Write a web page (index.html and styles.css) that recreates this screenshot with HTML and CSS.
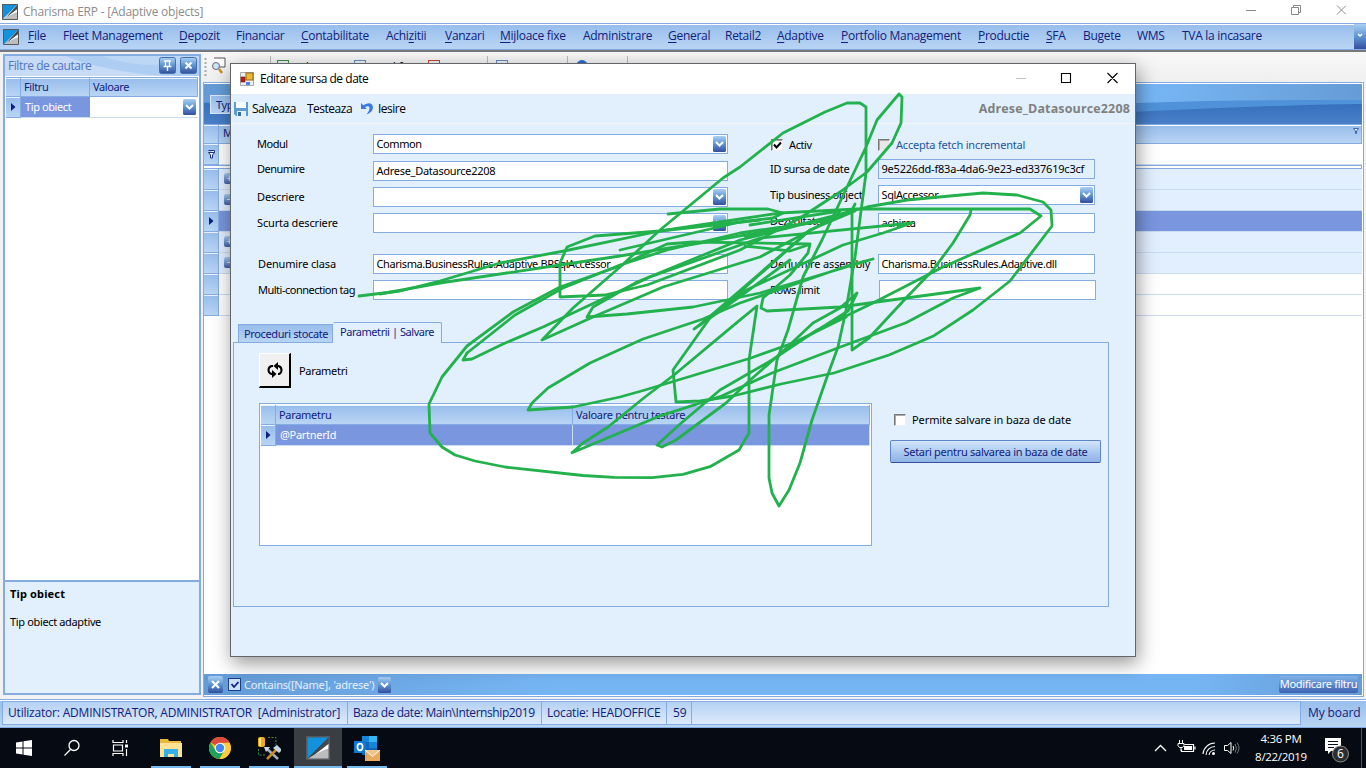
FILE: index.html
```html
<!DOCTYPE html>
<html lang="ro">
<head>
<meta charset="utf-8">
<title>Charisma ERP - [Adaptive objects]</title>
<link rel="stylesheet" href="styles.css">
</head>
<body>
<svg class="defs" width="0" height="0">
  <defs>
    <linearGradient id="gb" x1="0" y1="0" x2="0" y2="1"><stop offset="0" stop-color="#a9d0f3"/><stop offset=".5" stop-color="#5f94d2"/><stop offset="1" stop-color="#344f9e"/></linearGradient>
    <linearGradient id="band" x1="0" y1="0" x2="1" y2="0"><stop offset="0" stop-color="#649bd6"/><stop offset=".5" stop-color="#76b5f4"/><stop offset=".82" stop-color="#76b5f4"/><stop offset="1" stop-color="#669cd6"/></linearGradient>
    <linearGradient id="deep" x1="0" y1="0" x2="0" y2="1"><stop offset="0" stop-color="#356fbd"/><stop offset="1" stop-color="#4a80c8"/></linearGradient>
    <symbol id="logo" viewBox="0 0 16 16"><path fill="#1292dc" d="M0 0h16L0 16z"/><path fill="#4a4a4c" d="M16 0v5L3 14.500z"/><path fill="#fff" d="M16 4.500V8C11 10 6 12.500 2.500 15z"/><path fill="#bdbdbd" d="M16 8v8H0C5 12.500 10 10 16 8z"/><path fill="none" stroke="#555a60" d="M.5.5h15v15H.5z"/></symbol>
    <symbol id="drop" viewBox="0 0 13 16"><rect width="13" height="16" rx="1.500" fill="url(#gb)"/><path d="M3 6l3.500 3.500L10 6" fill="none" stroke="#fff" stroke-width="2"/></symbol>
    <symbol id="ptr" viewBox="0 0 5 8"><path d="M0 0l4.500 4L0 8z" fill="#0a2080"/></symbol>
  </defs>
</svg>
<div class="app">
  <header class="titlebar">
    <svg width="16" height="16"><use href="#logo"/></svg>
    <span class="app-title">Charisma ERP - [Adaptive objects]</span>
    <svg class="win-buttons" width="100" height="14" fill="none" stroke="#8a8a8a"><path d="M0 7.500h10M45.500 4.500h7v7h-7zM47.500 4.500v-2h7v7h-2M91 2.500l9 9M100 2.500l-9 9"/></svg>
  </header>

  <nav class="menubar">
    <svg width="16" height="16"><use href="#logo"/></svg>
    <div class="menu">
      <span><u>F</u>ile</span><span>Fleet Management</span><span><u>D</u>epozit</span><span>F<u>i</u>nanciar</span><span><u>C</u>ontabilitate</span><span>Achi<u>z</u>itii</span><span><u>V</u>anzari</span><span><u>M</u>ijloace fixe</span><span>Administrare</span><span><u>G</u>eneral</span><span>Retail2</span><span><u>A</u>daptive</span><span><u>P</u>ortfolio Management</span><span><u>P</u>roductie</span><span><u>S</u>FA</span><span>Bugete</span><span>WMS</span><span>TVA la incasare</span>
    </div>
    <svg class="menu-more" width="12" height="25"><rect width="12" height="25" fill="url(#gb)"/><path d="M4 10l2 2 2-2" fill="none" stroke="#fff" stroke-width="1.500"/></svg>
  </nav>

  <main class="workspace">
    <aside class="side">
      <div class="side-head">
        <svg class="curve" width="194" height="20"><path d="M60 0Q110 20 194 21H0V0z" fill="#c7dbf6"/><path d="M97 0Q140 16 194 4V0z" fill="#bcd6f6"/></svg>
        <span class="side-title">Filtre de cautare</span>
        <svg width="38" height="17"><rect x=".5" y=".5" width="16" height="16" rx="2" fill="url(#gb)" stroke="#456fae"/><path d="M5 4h7M6.500 4v5M10.500 4v5M4.500 9.500h8M8.500 10v4" stroke="#fff" stroke-width="1.300" fill="none"/><rect x="21.500" y=".5" width="16" height="16" rx="2" fill="url(#gb)" stroke="#456fae"/><path d="M26.500 5.500l6 6M32.500 5.500l-6 6" stroke="#fff" stroke-width="2"/></svg>
      </div>
      <div class="filter-grid">
        <span class="cell-h"></span><span class="cell-h t11">Filtru</span><span class="cell-h t11">Valoare</span>
        <span class="cell-i"><svg width="5" height="8"><use href="#ptr"/></svg></span><span class="cell-sel t11">Tip obiect</span><span class="cell-v"><svg width="13" height="16"><use href="#drop"/></svg></span>
      </div>
      <div class="side-desc"><b>Tip obiect</b><p>Tip obiect adaptive</p></div>
    </aside>

    <section class="content">
      <div class="tools">
        <svg width="20" height="20"><path d="M1.500 2v18" stroke="#a8a8a8" stroke-width="2" stroke-dasharray="2 2"/></svg>
        <svg width="20" height="18"><path d="M4 2h11v9h-6" fill="#fff" stroke="#555"/><circle cx="6" cy="10" r="3.500" fill="#cfe6f8" stroke="#667"/><path d="M9 13l3 4" stroke="#d08a20" stroke-width="2.500"/></svg>
        <span class="tool tool-a">Cauta</span>
        <span class="tool tool-b"><i class="doc green"></i>Adauga</span>
        <span class="tool tool-c"><i class="doc"></i>Modifica</span>
        <span class="tool tool-d"><i class="doc red"></i>Sterge</span>
        <span class="tool tool-e"><i class="doc"></i>Activari</span>
        <span class="tool tool-f"><i class="doc blue"></i>Iesire</span>
      </div>
      <div class="sheet">
        <div class="group-band">
          <svg class="curve" width="1158" height="40"><rect width="1158" height="40" fill="url(#band)"/><path d="M0 18C300 24 700 22 932 19 1020 16 1100 16 1158 16v24H0z" fill="#4f92d9"/><path d="M0 19C120 24 300 40 700 40 830 34 1000 22 1158 20v20H0z" fill="url(#deep)"/></svg>
          <span class="group-tag t11">Type</span>
        </div>
        <div class="row head"><span class="ind"></span><span class="row-text t11">Modul</span><svg class="funnel" width="6" height="6"><path d="M.5.500h5L3.500 3v2.500h-1V3z" fill="#fff" stroke="#4567b5"/></svg></div>
        <div class="row blank filter"><span class="ind"><svg width="7" height="9"><path d="M.5.500h6v2L4.500 5v3h-2V5l-2-2.500h6" fill="#fff" stroke="#1c348f"/></svg></span></div>
        <div class="split"></div>
        <div class="row"><span class="ind"></span><i class="box">+</i></div>
        <div class="row"><span class="ind"></span><i class="box">−</i></div>
        <div class="row sel"><span class="ind"><svg width="5" height="8"><use href="#ptr"/></svg></span></div>
        <div class="row"><span class="ind"></span><i class="box">+</i></div>
        <div class="row"><span class="ind"></span><i class="box">−</i></div>
        <div class="row blank"><span class="ind"></span></div>
        <div class="row blank"><span class="ind"></span></div>
        <div class="void"></div>
        <div class="filter-bar">
          <svg width="35" height="17"><rect width="15" height="17" rx="2" fill="url(#gb)"/><path d="M4 5l7 7M11 5l-7 7" stroke="#fff" stroke-width="2"/><rect x="20.500" y="2.500" width="12" height="12" fill="#cfe1f8" stroke="#1c3f8c"/><path d="M23.500 8l2.500 3 4.500-5" fill="none" stroke="#0a2080" stroke-width="1.800"/></svg>
          <span class="expr t11">Contains([Name], 'adrese')</span>
          <svg width="13" height="16"><use href="#drop"/></svg>
          <span class="edit-filter t11">Modificare filtru</span>
        </div>
      </div>
    </section>
  </main>

  <footer class="status">
    <span class="seg s1">Utilizator: ADMINISTRATOR, ADMINISTRATOR&nbsp; [Administrator]</span><span class="seg s2">Baza de date: Main\Internship2019</span><span class="seg s3">Locatie: HEADOFFICE</span><span class="seg s4">59</span><span class="seg s5"></span><span class="board">My board</span>
  </footer>

  <div class="taskbar">
    <div class="tb"><svg width="18" height="18"><path fill="#fff" d="M1 3.500l6.500-1v6H1zM8.500 2.300L17 1v7.500H8.500zM1 9.500h6.500v6L1 14.500zM8.500 9.500H17V17l-8.500-1.300z"/></svg></div>
    <div class="tb"><svg width="18" height="18" fill="none" stroke="#fff" stroke-width="1.300"><circle cx="11" cy="6.500" r="5"/><path d="M7.500 10.500L1.500 16.500"/></svg></div>
    <div class="tb"><svg width="18" height="18" fill="none" stroke="#fff" stroke-width="1.200"><path d="M2 1v2.500h10V1M2.500 6h9v6h-9zM2 17v-2.500h10V17M15.500 1v3M15.500 10v7"/><path d="M14 5.500h3v3h-3z" fill="#fff" stroke="none"/></svg></div>
    <div class="tb on w49"><svg width="22" height="20"><path d="M0 1h8l1 2h12v16H0z" fill="#e9b93c"/><path d="M0 5h22v14H0z" fill="#ffe394"/><path d="M4 11h14v8h-4v-3H8v3H4z" fill="#36aee8"/></svg></div>
    <div class="tb on w49"><svg width="22" height="22"><circle cx="11" cy="11" r="11" fill="#fbc116"/><path d="M11 11L1.500 5.500A11 11 0 0 1 20.500 5.500L11 6z" fill="#de4b3e"/><path d="M1.500 5.500A11 11 0 0 0 10.500 22l5-8.500L6.300 13z" fill="#1fa15d"/><path d="M11 6h9.500a11 11 0 0 1-10 16l5-8.500z" fill="#fccd3a"/><circle cx="11" cy="11" r="5.300" fill="#fff"/><circle cx="11" cy="11" r="4.200" fill="#4285f4"/></svg></div>
    <div class="tb on w49"><svg width="24" height="24"><rect x="1" y="1" width="7" height="10" rx="2" fill="#f0a81c"/><path d="M3 2v8" stroke="#ffe88a" stroke-width="2"/><path d="M11 1.500h8v9M1.500 13v6h7" fill="none" stroke="#4b8a3c" stroke-dasharray="2 1.500"/><path d="M9 12l12 11" stroke="#9fb2c4" stroke-width="2.500"/><path d="M20 13L10 23" stroke="#c88a28" stroke-width="2.500"/><path d="M7 11l6 0-4 5zM16 12l4-3 5 5-3 3z" fill="#c9d6e2"/></svg></div>
    <div class="tb on active"><svg width="24" height="24"><use href="#logo"/></svg></div>
    <div class="tb on w49 out"><svg width="26" height="26"><path d="M8 1h15v19H8z" fill="#1066b5"/><path d="M15 1h8v6h-8z" fill="#35b8f1"/><path d="M8 1h7v6H8zM15 7h8v6h-8z" fill="#1684d8"/><rect y="6" width="12" height="12" fill="#0f78d4"/><ellipse cx="6" cy="12" rx="2.600" ry="3.300" fill="none" stroke="#fff" stroke-width="1.700"/><path d="M11 15h15v11H11z" fill="#e9a95e"/><path d="M11 15l7.500 6.500L26 15" fill="#f4c58b" stroke="#fff"/></svg></div>
    <div class="tray">
      <svg width="90" height="20" fill="none" stroke="#fff"><path d="M5 13l5.500-5.500L16 13" stroke-width="1.300"/><path d="M34.500 6.500h9v7h-12v-2M45 8.500v3" stroke-width="1.200"/><path fill="#fff" stroke="none" d="M34 8h8v4h-8z"/><path d="M29.500 2v3M32.500 2v3M28 5.500h6v2l-1.500 2h-3L28 7.500zM31 9v4"/><path d="M53 16A12 12 0 0 1 65 5M56 17a9 9 0 0 1 9-8.500M59 17a6 6 0 0 1 6-5" stroke-width="1.100"/><circle cx="63.500" cy="15.500" r="1.500" fill="#fff" stroke="none"/><path d="M74.500 7.500h3l3.500-3v11l-3.500-3h-3z"/><path d="M83 8q1.500 2 0 4.500"/><path d="M85 6q3 4 0 8.500M87 4.500q4 5.500 0 11" stroke="#777"/></svg>
      <div class="clock"><span>4:36 PM</span><span>8/22/2019</span></div>
      <svg class="note" width="26" height="26"><path d="M0 1h16v13H6l-3 3v-3H0z" fill="#fff"/><path d="M3 4.500h10M3 7.500h10M3 10.500h6" stroke="#0a0e16"/><circle cx="15.500" cy="17" r="8" fill="#2b2d31" stroke="#8c8c8c"/><text x="15.500" y="21" fill="#fff" font-size="12" text-anchor="middle" font-family="Open Sans, sans-serif">6</text></svg>
    </div>
  </div>
</div>

<div class="dialog">
  <div class="dlg-title">
    <svg width="14" height="14"><path d="M.5.500h13v13H.5z" fill="#eee" stroke="#aaa"/><rect x="6" y="1" width="7" height="7" fill="#e9b93a" stroke="#8f6a10"/><rect x="1" y="5" width="4" height="5" fill="#b3201a" stroke="#7c120e" stroke-width=".6"/><rect x="6" y="10" width="4" height="3" fill="#4f7fe8"/></svg>
    <span>Editare sursa de date</span>
    <svg class="dlg-buttons" width="102" height="12" fill="none" stroke="#000" stroke-width="1.100"><path d="M0 6.500h10" stroke="#c4c4c4"/><path d="M45.500 1.500h9v9h-9zM91.500 1l10 10M101.500 1l-10 10"/></svg>
  </div>
  <div class="dlg-tools">
    <svg width="14" height="14"><path d="M0 0h14v14H2l-2-2z" fill="#5b9bd0"/><path d="M2 0h10v6H2z" fill="#f5fbff"/><path d="M3 9h9v5H3z" fill="#e8eef4"/><path d="M4 10h3v4H4z" fill="#3b6c9c"/></svg>
    <span class="w-sal">Salveaza</span><span class="w-test">Testeaza</span>
    <svg width="13" height="13"><path d="M0 1v6h6L4 5.200Q7.500 3 8.500 5.500 8.800 9 5.500 12.500 11.500 10.500 12 5.500 11-1.500 2.300 3.200z" fill="#3a7be8"/></svg>
    <span class="w-ies">Iesire</span>
    <b class="dlg-name">Adrese_Datasource2208</b>
  </div>
  <div class="form t11">
    <div class="col left">
      <div class="f"><label>Modul</label><div class="in">Common<svg width="13" height="16"><use href="#drop"/></svg></div></div>
      <div class="f g7"><label class="up">Denumire</label><div class="in name">Adrese_Datasource2208</div></div>
      <div class="f g6"><label class="sp">Descriere</label><div class="in"><svg width="13" height="16"><use href="#drop"/></svg></div></div>
      <div class="f g6"><label class="sp">Scurta descriere</label><div class="in"><svg width="13" height="16"><use href="#drop"/></svg></div></div>
      <div class="f g21"><label class="sp in1">Denumire clasa</label><div class="in">Charisma.BusinessRules.Adaptive.BRSqlAccessor</div></div>
      <div class="f g6"><label class="in1">Multi-connection tag</label><div class="in"></div></div>
    </div>
    <div class="col right">
      <div class="f checks"><i class="chk"><svg width="9" height="9"><path d="M1 3.500l2.500 3L8 1.500" fill="none" stroke="#000" stroke-width="2"/></svg></i><span class="activ">Activ</span><i class="chk off"></i><span class="fetch">Accepta fetch incremental</span></div>
      <div class="f g5"><label>ID sursa de date</label><div class="in ro">9e5226dd-f83a-4da6-9e23-ed337619c3cf</div></div>
      <div class="f g6"><label>Tip business object</label><div class="in">SqlAccessor<svg width="13" height="16"><use href="#drop"/></svg></div></div>
      <div class="f g8"><label class="up">Dezvoltator</label><div class="in">achirca</div></div>
      <div class="f g21"><label class="sp2">Denumire assembly</label><div class="in">Charisma.BusinessRules.Adaptive.dll</div></div>
      <div class="f g6"><label class="rl">Rows limit</label><div class="in"></div></div>
    </div>
  </div>
  <div class="tabs t11"><span class="tab">Proceduri stocate</span><span class="tab cur">Parametrii | Salvare</span></div>
  <div class="page t11">
    <div class="refresh"><span class="rbtn"><svg width="16" height="16" fill="none" stroke="#000" stroke-width="2"><path d="M6 4H4.500Q1.500 5 1.500 8T4.500 12H6M10 4h1.500Q14.500 5 14.500 8T12 12h-1"/><path d="M11 0v8L6.500 4zM5 8v8l4.500-4z" fill="#000" stroke="none"/></svg></span><span class="par">Parametri</span></div>
    <div class="page-body">
      <div class="params">
        <span class="cell-h"></span><span class="cell-h">Parametru</span><span class="cell-h">Valoare pentru testare</span>
        <span class="cell-i"><svg width="5" height="8"><use href="#ptr"/></svg></span><span class="cell-sel">@PartnerId</span><span class="cell-sel"></span>
      </div>
      <div class="save">
        <div class="save-check"><i class="chk"></i><span>Permite salvare in baza de date</span></div>
        <div class="save-btn">Setari pentru salvarea in baza de date</div>
      </div>
    </div>
  </div>
</div>

<svg class="ink" width="1366" height="768" fill="none" stroke="#22b14c" stroke-width="2.800" stroke-linecap="round" stroke-linejoin="round">
  <path d="M359 296L400 291L440 281L500 263L564 251L660 231L740 219L780 213L857 209H1030L1041 216L1020 233L943 267L873 303L817 330L772 360L720 390L679 425L657 445L662 447L676 440L726 403L748 382L781 353L848 311L857 293L840 308L813 323L781 353"/>
  <path d="M380 294L440 283L560 265L620 256L700 243L790 227L840 214L867 207L907 200L950 196L983 193L1017 195L1043 202L1051 210L1052 226L1010 281L973 310L934 335.700L889 355L834 373L781 384L733 396L700 401L676 402L673 370L712 315L740 292L810 230"/>
  <path d="M761 308L767 311L840 307L980 288L953 298L906 322.700L841 346.700L772 373L720 396.700L658 416.700L600 441L572 452.700L583 443L608 427L645 397L674 375L738 321.700L757 306L749 360V433L739 450L710 466.700L683 474.300L652 477.700L614 477.300L583 475.500L505 467L475 461L455 455L442 447L430 433L429 404L442 377L467 346L513 312L560 287L617 267L667 244L693 242L810 244L808 253L790 275L763 298L761 308"/>
  <path d="M467 353L463 360L472 359L503 344L543 327L607 297L650 277L760 238L912 223L883 233L843 245L740 293L694 329L720 311L790 260"/>
  <path d="M467 353L515 315L563 288L620 265L667 250L740 233L830 220M560 297V263L567 247L595 236L660 231L760 220M560 297L605 295L647 285L740 250L800 218L840 192L867 172L892 143L901 123L902 97L899 94L877 120L866 147L822 240L803 277L788 330L777 360L769 415V478L772 493L779 506L789 490L800 463L812 420L827 377L838 347L846 310L855 257L866 173V107L860 103H847L825 112L783 133L740 167L723 178L660 230L620 267L573 308L542 340L593 317L663 287L760 257L830 220"/>
  <path d="M587 317L593 307L637 282L740 240L855 211M587 317L627 314L693 307L760 293L873 259L850 265L740 303L703 319L643 339L590 363L548 388L532 403L528 410L573 407L620 397L645 390L751 358L793 343L846 317M855 204L852 210V350L869 338L907 297L933 270L953 243L970 215L971 210M668 214L720 209H768L783 213L773 218L740 222L620 250M700 325L810 230L855 211M750 225L840 211L835 218L745 236M745 246L790 251L808 245"/>
</svg>
</body>
</html>
```
FILE: styles.css
```css
* { box-sizing: border-box; }
body { margin: 0; width: 1366px; height: 768px; overflow: hidden; position: relative; background: #fff; color: #000; font-family: "Open Sans", "Noto Sans", sans-serif; font-size: 12px; white-space: nowrap; }
svg { display: block; flex: none; }
p { margin: 0; }
i { font-style: normal; }
.defs { position: absolute; }
.t11 { font-family: "Noto Sans", sans-serif; font-size: 11px; letter-spacing: -.4px; }

.app { display: flex; flex-direction: column; height: 768px; }
.titlebar { height: 23px; display: flex; align-items: center; padding: 0 18px 0 2px; gap: 5px; color: #8c8c8c; }
.app-title { letter-spacing: -.22px; }
.win-buttons { margin: -3px 2px 0 auto; }

.menubar { height: 27px; border: 1px solid #84ace2; border-width: 1px 0; box-shadow: inset 0 1px #fff; background: linear-gradient(#97bdec, #b9d5f4); display: flex; align-items: center; padding-left: 3px; color: #10207c; }
.menu { flex: 1; margin: -2px 0 0 9px; display: grid; grid-template-columns: 35px 116px 57px 65px 85px 59px 55px 83px 85px 57px 52px 64px 137px 68px 37px 54px 45px auto; letter-spacing: -.28px; }
.menu u { text-underline-offset: 2px; }

.workspace { height: 649px; border-top: 2px solid #77787c; display: flex; background: #f2f2f2; }
.side { width: 198px; margin: 2px 0 4px 3px; border: 2px solid #84ace2; background: #fff; display: flex; flex-direction: column; }
.side-head { position: relative; height: 20px; flex: none; background: #aecdf3; display: flex; align-items: center; padding: 0 2px 2px 3px; color: #5175bd; }
.curve { position: absolute; left: 0; top: 0; }
.side-title { position: relative; flex: 1; letter-spacing: -.45px; }
.side-head svg:last-child { position: relative; }
.filter-grid { flex: none; margin: 1px 1px 0; border-top: 1px solid #84ace2; display: grid; grid-template-columns: 15px 69px auto; grid-template-rows: 19px 21px; }
.cell-h { background: linear-gradient(#97bdec, #b9d5f4); border-right: 1px solid #84ace2; border-bottom: 1px solid #84ace2; color: #10207c; padding: 0 0 1px 3px; display: flex; align-items: center; box-shadow: inset 0 1px #eaf3fd; }
.cell-i { background: linear-gradient(#97bdec, #b9d5f4); border-right: 1px solid #84ace2; border-bottom: 1px solid #84ace2; display: flex; align-items: center; justify-content: center; box-shadow: inset 0 1px #eaf3fd; }
.cell-sel { background: #7a96df; color: #fff; padding: 0 0 1px 4px; display: flex; align-items: center; border-bottom: 1px solid #cadcf2; }
.cell-v { display: flex; align-items: center; justify-content: flex-end; padding-right: 2px; border-bottom: 1px solid #cadcf2; }
.side-desc { margin-top: auto; height: 113px; flex: none; border-top: 2px solid #84ace2; background: #e2f0fe; padding: 3px 5px; font: 11px "Noto Sans", sans-serif; letter-spacing: -.35px; }
.side-desc b { display: block; line-height: 17px; letter-spacing: .15px; }
.side-desc p { margin-top: 11px; line-height: 17px; }

.content { flex: 1; display: flex; flex-direction: column; min-width: 0; padding-left: 2px; }
.tools { height: 30px; flex: none; background: linear-gradient(#f8f8f8, #efefef); display: flex; align-items: flex-start; padding: 4px 0 0 1px; }
.tools svg:first-child { width: 6px; }
.tool { display: flex; flex: none; gap: 5px; line-height: 23px; height: 20px; letter-spacing: -.2px; }
.tool-a { width: 41px; border-right: 1px solid #bbb; margin-right: 6px; }
.tool-b { width: 77px; }
.tool-c { width: 74px; }
.tool-d { width: 60px; border-right: 1px solid #bbb; margin-right: 8px; }
.tool-e { width: 72px; border-right: 1px solid #bbb; margin-right: 8px; }
.tool-f { width: 52px; border-right: 1px solid #bbb; }
.doc { width: 12px; height: 14px; margin-top: 4px; border: 1px solid #6a8dbb; background: #eef4fb; }
.green { border-color: #3f8f3f; }
.red { border-color: #c9482e; }
.blue { border-color: #2c6fd0; background: #2c6fd0; border-radius: 6px; }
.sheet { flex: 1; border: 1px solid #84ace2; margin: 0 2px 2px 0; padding: 1px 1px 1px 0; background: #fff; display: flex; flex-direction: column; }
.group-band { position: relative; height: 40px; flex: none; overflow: hidden; background: #4a83cb; padding: 11px 6px; }
.group-tag { position: relative; display: block; width: 80px; height: 19px; border: 1px solid #d9e8fa; background: linear-gradient(#97bdec, #b9d5f4); color: #10207c; padding-left: 5px; line-height: 18px; }
.row { height: 21px; flex: none; display: flex; background: #e2effe; border-bottom: 1px solid #cadcf2; }
.ind { width: 15px; border-right: 1px solid #84ace2; border-bottom: 1px solid #84ace2; margin-bottom: -1px; background: linear-gradient(#97bdec, #b9d5f4); box-shadow: inset 0 1px #eaf3fd; display: flex; align-items: center; justify-content: center; }
.head { height: 20px; background: linear-gradient(#97bdec, #b9d5f4); border: 1px solid #84ace2; border-width: 1px 1px 1px 0; box-shadow: inset 0 1px #fff; color: #10207c; }
.row-text { flex: 1; padding-left: 4px; line-height: 16px; }
.funnel { margin: 3px 2px 0; }
.blank { background: #fff; }
.sel { background: #7a96df; }
.split { height: 4px; flex: none; background: #fff; border: 1px solid #84ace2; border-left: 0; }
.box { width: 11px; height: 11px; margin: 4px 0 0 5px; border-radius: 2px; background: linear-gradient(#a9d0f3, #3f60aa); color: #fff; font-size: 11px; line-height: 10px; text-align: center; }
.void { flex: 1; }
.filter-bar { height: 21px; flex: none; background: linear-gradient(90deg, #649bd6, #76b5f4 30%, #76b5f4 85%, #669cd6); display: flex; align-items: center; padding: 0 4px; color: #e6f2fe; }
.expr { width: 130px; margin: 0 4px 0 1px; letter-spacing: -.2px; }
.edit-filter { margin-left: auto; width: 79px; height: 17px; border-radius: 2px; background: linear-gradient(#7fb2e8, #3e62b0); line-height: 16px; text-align: center; color: #fff; letter-spacing: -.3px; }

.status { height: 29px; flex: none; border: 1px solid #84ace2; border-width: 1px 0; background: linear-gradient(#97bdec, #b9d5f4); padding: 1px 0 2px 2px; display: flex; color: #10207c; line-height: 22px; box-shadow: inset 0 1px #fff; letter-spacing: -.2px; }
.seg { border: 1px solid #84ace2; border-left-width: 0; background: linear-gradient(#b4d1f2, #dceafb); padding-left: 6px; }
.s1 { width: 346px; border-left-width: 1px; padding-left: 5px; }
.s2 { width: 194px; padding-left: 5px; letter-spacing: -.42px; }
.s3 { width: 125px; padding-left: 5px; }
.s4 { width: 25px; padding-left: 6px; }
.s5 { flex: 1; }
.board { width: 65px; padding-left: 7px; line-height: 24px; letter-spacing: -.1px; }

.taskbar { height: 40px; flex: none; background: #060a12; display: flex; }
.tb { width: 48px; display: flex; align-items: center; justify-content: center; }
.tb:nth-child(4) { margin-left: 3px; }
.w49 { width: 49px; }
.on { background: linear-gradient(#76b9ed, #76b9ed) 4px bottom / 40px 2px no-repeat; padding-right: 1px; }
.active { width: 48px; padding-right: 0; background: linear-gradient(#76b9ed, #76b9ed) center bottom / 48px 2px no-repeat, #3a3d41; }
.out { padding-left: 1px; background-position: 5px bottom; }
.tray { margin-left: auto; width: 212px; display: flex; align-items: center; color: #fff; border-right: 1px solid #555; margin-right: 4px; }
.clock { width: 62px; margin-left: 10px; display: flex; flex-direction: column; align-items: center; line-height: 18px; font-size: 11.500px; letter-spacing: -.3px; }
.note { margin: 4px 0 0 13px; }

.dialog { position: absolute; left: 230px; top: 63px; width: 906px; height: 594px; border: 1px solid #62656a; background: #e2f0fe; box-shadow: 2px 6px 18px rgba(0,0,0,.42); display: flex; flex-direction: column; }
.dlg-title { height: 30px; flex: none; background: #fff; display: flex; align-items: center; gap: 6px; padding: 0 17px 1px 9px; letter-spacing: -.48px; }
.dlg-buttons { margin: -1px 0 0 auto; }
.dlg-tools { height: 30px; flex: none; border-bottom: 1px solid #f2f4f8; display: flex; align-items: center; padding: 0 5px 0 3px; letter-spacing: -.5px; }
.w-sal { width: 55px; margin-left: 4px; }
.w-test { width: 54px; }
.w-ies { margin-left: 4px; }
.dlg-name { margin-left: auto; color: #808080; font-size: 12.500px; letter-spacing: .14px; }
.form { display: flex; padding: 10px 0 0 26px; height: 199px; flex: none; }
.col { display: flex; flex-direction: column; }
.left { width: 513px; }
.f { height: 20px; display: flex; line-height: 20px; }
.g5 { margin-top: 5px; } .g6 { margin-top: 6px; } .g7 { margin-top: 7px; } .g8 { margin-top: 8px; } .g21 { margin-top: 21px; }
.f label { width: 116px; letter-spacing: -.5px; }
.right .f label { width: 108px; letter-spacing: -.32px; }
.up { margin-top: -2px; }
.in1 { padding-left: 1px; }
.f label.sp { letter-spacing: -.15px; }
.right .f .sp2 { letter-spacing: -.15px; }
.right .f .rl { width: 109px; }
.in { width: 355px; height: 20px; border: 1px solid #84ace2; background: #fff; padding: 0 1px 0 2.500px; line-height: 18px; display: flex; align-items: center; letter-spacing: -.4px; }
.right .in { width: 217px; }
.in svg { margin-left: auto; }
.name { letter-spacing: -.28px; }
.right .in.ro { background: #e2f0fe; letter-spacing: -.2px; }
.chk { width: 12px; height: 12px; flex: none; border: 1px solid #d8d8d8; border-color: #777 #eee #eee #777; background: #fff; box-shadow: inset 1px 1px #aaa; }
.chk svg { margin: 1px; }
.checks { align-items: center; padding: 1px 0 0 1px; }
.activ { width: 94px; flex: none; padding-left: 6px; }
.off { background: #e8e8e8; margin-left: 1px; }
.fetch { color: #1c55a0; padding-left: 6px; letter-spacing: -.2px; }
.tabs { height: 20px; flex: none; display: flex; align-items: flex-end; padding-left: 7px; color: #10207c; margin-bottom: -1px; position: relative; }
.tab { width: 95px; height: 19px; border: 1px solid #84ace2; background: linear-gradient(#97bdec, #b9d5f4); padding-left: 5px; line-height: 17px; letter-spacing: -.37px; }
.cur { width: 109px; height: 21px; border-left: 0; border-bottom: 0; border-radius: 2px 2px 0 0; background: #e2f0fe; padding-left: 7px; line-height: 18px; letter-spacing: -.45px; }
.page { margin-left: 2px; width: 876px; height: 265px; flex: none; border: 1px solid #84ace2; padding: 10px 0 0 25px; }
.refresh { display: flex; align-items: center; gap: 8px; height: 35px; }
.rbtn { width: 32px; height: 35px; border: 1px solid; border-color: #fff #000 #000 #fff; border-right-width: 2px; border-bottom-width: 2px; background: #f0f0f0; display: flex; align-items: center; justify-content: center; }
.par { letter-spacing: -.3px; }
.page-body { display: flex; margin-top: 15px; }
.params { width: 613px; height: 143px; border: 1px solid #84ace2; background: #fff; padding: 1px; display: grid; grid-template-columns: 15px 297px auto; grid-template-rows: 20px 21px; letter-spacing: -.3px; }
.params .cell-sel { border-right: 1px solid #cadcf2; }
.save { margin-left: 18px; }
.save-check { display: flex; align-items: center; gap: 6px; margin: 8px 0 0 4px; height: 17px; letter-spacing: -.08px; }
.save-btn { margin-top: 12px; width: 211px; height: 23px; border: 1px solid #5f85c8; border-bottom-color: #35509e; border-radius: 2px; background: linear-gradient(#d3e6fa, #a9c8ef 55%, #8fb3e6); color: #10207c; text-align: center; line-height: 21px; letter-spacing: -.28px; }

.ink { position: absolute; left: 0; top: 0; }
```
